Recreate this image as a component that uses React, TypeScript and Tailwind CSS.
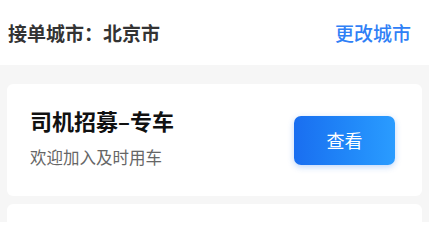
import React from "react";

export default function App() {
  return (
    <div
      className="w-[429px] h-[222px] bg-[#f6f6f6] overflow-hidden"
      style={{ fontFamily: '"Noto Sans CJK SC", "Noto Sans", sans-serif' }}
    >
      <div className="h-[65px] bg-white flex items-center justify-between pl-[8px] pr-[18px]">
        <span className="text-[19px] font-semibold text-[#333333] leading-none">接单城市：北京市</span>
        <span className="text-[19px] font-medium text-[#2f80f6] leading-none">更改城市</span>
      </div>
      <div className="px-[7px] pt-[19px] flex flex-col gap-[8px]">
        <div className="h-[112px] bg-white rounded-[6px] flex items-start justify-between pl-[23px] pr-[27px]">
          <div className="flex flex-col pt-[25px]">
            <span className="text-[22px] font-bold text-[#111111] leading-none">司机招募–专车</span>
            <span className="mt-[18px] text-[16.5px] text-[#666666] leading-none">欢迎加入及时用车</span>
          </div>
          <button className="self-center w-[101px] h-[49px] rounded-[7px] bg-gradient-to-r from-[#1a6ef0] to-[#2a9cff] text-white text-[18px] shadow-[0_2px_6px_rgba(40,120,240,0.3)]">
            查看
          </button>
        </div>
        <div className="h-[40px] bg-white rounded-[6px]" />
      </div>
    </div>
  );
}
